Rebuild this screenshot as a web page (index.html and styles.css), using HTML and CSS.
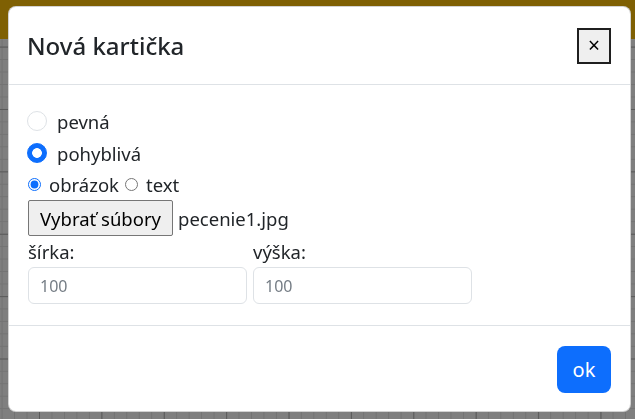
FILE: index.html
```html
<!DOCTYPE html>
<html lang="sk">
<head>
<meta charset="utf-8">
<title>Nová kartička</title>
<link rel="stylesheet" href="styles.css">
</head>
<body>
<nav class="navbar"></nav>
<div class="backdrop"></div>
<div class="modal">
  <div class="modal-header">
    <h5 class="modal-title">Nová kartička</h5>
    <button class="close-btn" type="button">×</button>
  </div>
  <div class="modal-body">
    <label class="check-row"><input class="check-input" type="radio" name="typ"><span>pevná</span></label>
    <label class="check-row"><input class="check-input" type="radio" name="typ" checked><span>pohyblivá</span></label>
    <div class="choice-row">
      <input class="native-radio first" type="radio" name="obsah" checked><span>obrázok</span><input class="native-radio" type="radio" name="obsah"><span>text</span>
    </div>
    <div class="file-row">
      <button class="file-btn" type="button">Vybrať súbory</button><span class="file-name">pecenie1.jpg</span>
    </div>
    <div class="size-row">
      <div class="size-col">
        <label class="size-label">šírka:</label>
        <input class="form-control" type="text" placeholder="100">
      </div>
      <div class="size-col">
        <label class="size-label">výška:</label>
        <input class="form-control" type="text" placeholder="100">
      </div>
    </div>
  </div>
  <div class="modal-footer">
    <button class="btn-ok" type="button">ok</button>
  </div>
</div>
</body>
</html>
```

FILE: styles.css
```css
* { box-sizing: border-box; }
html, body { margin: 0; height: 100%; }
body {
  font-family: "Noto Sans", sans-serif;
  color: #212529;
  background-color: #fff;
  background-image:
    linear-gradient(to right, #b5b5b5 1px, transparent 1px),
    linear-gradient(to bottom, #b5b5b5 1px, transparent 1px),
    linear-gradient(to right, #e6e6e6 1px, transparent 1px),
    linear-gradient(to bottom, #e6e6e6 1px, transparent 1px);
  background-size: 62.4px 62.4px, 62.4px 62.4px, 12.48px 12.48px, 12.48px 12.48px;
  background-position: 39px 46.6px, 39px 46.6px, 39px 46.6px, 39px 46.6px;
}
.navbar { height: 39px; background: #ffc107; }
.backdrop { position: fixed; inset: 0; background: rgba(0, 0, 0, .5); }
.modal {
  position: fixed;
  top: 6px;
  left: 8px;
  width: 623px;
  background: #fff;
  border: 1px solid rgba(0, 0, 0, .175);
  border-radius: 8px;
}
.modal-header {
  height: 78px;
  display: flex;
  align-items: center;
  justify-content: space-between;
  padding: 0 19px;
  border-bottom: 1px solid #dee2e6;
}
.modal-title {
  margin: 0 0 0 -1px;
  font-size: 24px;
  font-weight: 500;
  line-height: 1.5;
}
.close-btn {
  width: 34px;
  height: 36px;
  padding: 0;
  border: 2px solid #1f1f1f;
  background: #efefef;
  color: #000;
  font-family: "Noto Sans", sans-serif;
  font-size: 21px;
  line-height: 1;
}
.modal-body { padding: 20px 19px 21px; font-size: 18.5px; }
.check-row {
  display: flex;
  align-items: center;
  gap: 10px;
  height: 32px;
}
.check-input {
  appearance: none;
  width: 20px;
  height: 20px;
  margin: 0 0 0 -1px;
  border: 1px solid #dee2e6;
  border-radius: 50%;
  background: #fff;
}
.check-input:checked {
  border-color: #0d6efd;
  background: radial-gradient(circle, #fff 4.5px, #0d6efd 5.2px);
}
.choice-row {
  display: flex;
  align-items: center;
  height: 31px;
}
.native-radio {
  width: 13px;
  height: 13px;
  margin: 0 8px 0 6px;
  accent-color: #0d6efd;
}
.native-radio.first { margin-left: 0; }
.file-row { display: flex; align-items: center; height: 36px; }
.file-btn {
  height: 36px;
  padding: 0 11px;
  border: 1px solid #767676;
  border-radius: 2px;
  background: #efefef;
  color: #000;
  font-family: "Noto Sans", sans-serif;
  font-size: 18.5px;
}
.file-name { margin-left: 5px; }
.size-row { display: flex; gap: 6px; }
.size-col { display: flex; flex-direction: column; width: 219px; }
.size-label { height: 31px; line-height: 31px; }
.form-control {
  height: 37px;
  padding: 0 11px;
  border: 1px solid #dee2e6;
  border-radius: 6px;
  font-family: "Noto Sans", sans-serif;
  font-size: 16px;
  color: #212529;
}
.form-control::placeholder { color: #757d85; }
.modal-footer {
  display: flex;
  justify-content: flex-end;
  padding: 20px 19px 18px;
  border-top: 1px solid #dee2e6;
}
.btn-ok {
  width: 54px;
  height: 47px;
  border: none;
  border-radius: 8px;
  background: #0d6efd;
  color: #fff;
  font-family: "Noto Sans", sans-serif;
  font-size: 20px;
  font-weight: 400;
}
```
